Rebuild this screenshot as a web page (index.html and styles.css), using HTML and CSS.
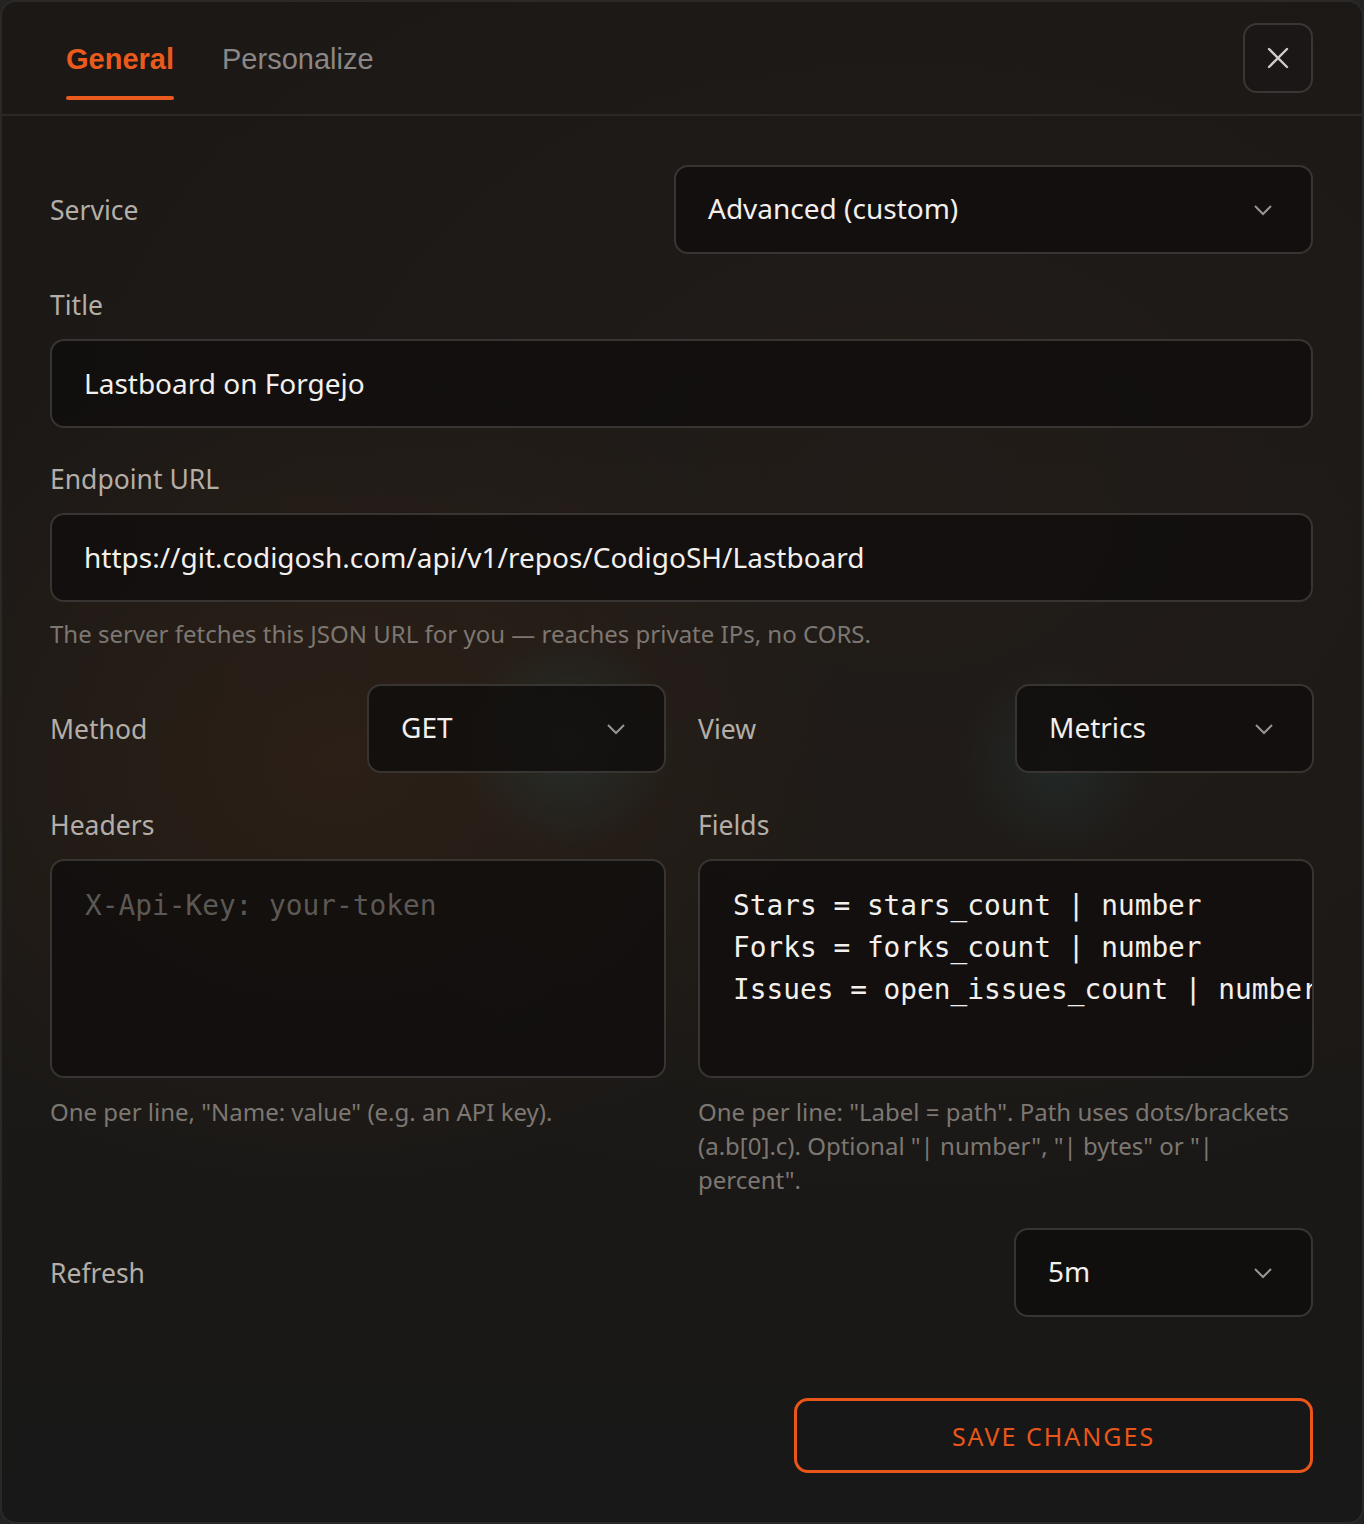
FILE: index.html
```html
<!DOCTYPE html>
<html>
<head>
<meta charset="utf-8">
<link rel="stylesheet" href="styles.css">
</head>
<body>
<div class="dialog">
  <header class="head">
    <nav class="tabs">
      <span class="tab active">General</span>
      <span class="tab">Personalize</span>
    </nav>
    <button class="close" aria-label="Close">
      <svg width="22" height="22" viewBox="0 0 22 22"><path d="M2 2L20 20M20 2L2 20" stroke="#cfcbc7" stroke-width="2.4" stroke-linecap="round"/></svg>
    </button>
  </header>
  <main class="body">
    <div class="row service">
      <label class="lbl">Service</label>
      <div class="select wide"><span>Advanced (custom)</span><svg class="chev" viewBox="0 0 20 12"><path d="M2 2L10 10L18 2" fill="none" stroke="#9a9590" stroke-width="2"/></svg></div>
    </div>
    <div class="field">
      <label class="lbl">Title</label>
      <div class="input">Lastboard on Forgejo</div>
    </div>
    <div class="field">
      <label class="lbl">Endpoint URL</label>
      <div class="input">https://git.codigosh.com/api/v1/repos/CodigoSH/Lastboard</div>
      <p class="help">The server fetches this JSON URL for you — reaches private IPs, no CORS.</p>
    </div>
    <div class="grid">
      <div class="row">
        <label class="lbl">Method</label>
        <div class="select"><span>GET</span><svg class="chev" viewBox="0 0 20 12"><path d="M2 2L10 10L18 2" fill="none" stroke="#9a9590" stroke-width="2"/></svg></div>
      </div>
      <div class="row">
        <label class="lbl">View</label>
        <div class="select"><span>Metrics</span><svg class="chev" viewBox="0 0 20 12"><path d="M2 2L10 10L18 2" fill="none" stroke="#9a9590" stroke-width="2"/></svg></div>
      </div>
      <div class="col">
        <label class="lbl">Headers</label>
        <div class="area placeholder">X-Api-Key: your-token</div>
        <p class="help">One per line, "Name: value" (e.g. an API key).</p>
      </div>
      <div class="col">
        <label class="lbl">Fields</label>
        <div class="area"><div class="ln">Stars = stars_count | number</div><div class="ln">Forks = forks_count | number</div><div class="ln">Issues = open_issues_count | number</div></div>
        <p class="help">One per line: "Label = path". Path uses dots/brackets (a.b[0].c). Optional "| number", "| bytes" or "| percent".</p>
      </div>
    </div>
    <div class="row refresh">
      <label class="lbl">Refresh</label>
      <div class="select"><span>5m</span><svg class="chev" viewBox="0 0 20 12"><path d="M2 2L10 10L18 2" fill="none" stroke="#9a9590" stroke-width="2"/></svg></div>
    </div>
  </main>
  <footer class="foot">
    <button class="save">SAVE CHANGES</button>
  </footer>
</div>
</body>
</html>
```
FILE: styles.css
```css
* { box-sizing: border-box; }
html, body { margin: 0; padding: 0; }
body {
  background: #242322;
  width: 1364px;
  height: 1524px;
  font-family: "Noto Sans", sans-serif;
}
.dialog {
  width: 1364px;
  height: 1524px;
  border: 2px solid #2b2927;
  border-radius: 16px;
  overflow: hidden;
  display: flex;
  flex-direction: column;
  background:
    radial-gradient(circle at 565px 740px, rgba(40,70,72,0.40) 0, rgba(40,70,72,0) 110px),
    radial-gradient(circle at 1055px 760px, rgba(40,70,72,0.32) 0, rgba(40,70,72,0) 100px),
    radial-gradient(ellipse 520px 420px at 330px 760px, rgba(60,38,22,0.45) 0, rgba(60,38,22,0) 100%),
    radial-gradient(ellipse 900px 700px at 900px 500px, rgba(45,35,28,0.35) 0, rgba(45,35,28,0) 100%),
    linear-gradient(180deg, #1b1816 0%, #1c1916 60%, #191817 88%, #181818 100%);
}
.head {
  height: 114px;
  flex: none;
  border-bottom: 2px solid #2b2826;
  display: flex;
  align-items: flex-start;
  justify-content: space-between;
  padding: 0 49px 0 64px;
}
.tabs { display: flex; gap: 48px; height: 100%; }
.tab {
  font-family: "Liberation Sans", Arial, sans-serif;
  font-size: 29px;
  color: #8b8784;
  padding-top: 41px;
  height: 98px;
  position: relative;
}
.tab.active { color: #ea5a1c; font-weight: bold; }
.tab.active::after {
  content: "";
  position: absolute;
  left: 0; right: 0; bottom: 0;
  height: 4px;
  border-radius: 2px;
  background: #ea5a1c;
}
.close {
  margin-top: 21px;
  width: 70px; height: 70px;
  border: 2px solid #393634;
  border-radius: 14px;
  background: #1a1716;
  display: flex; align-items: center; justify-content: center;
  padding: 0;
}
.body {
  flex: none;
  padding: 49px 49px 0 48px;
  display: flex;
  flex-direction: column;
}
.lbl {
  font-size: 26.5px;
  color: #b3aea8;
  display: block;
}
.row {
  display: flex;
  align-items: center;
  justify-content: space-between;
  height: 89px;
}
.select, .input, .area {
  background: rgba(16,13,12,0.82);
  border: 2px solid #383432;
  border-radius: 14px;
  color: #f2efec;
  font-size: 28px;
}
.select {
  width: 299px;
  height: 89px;
  display: flex;
  align-items: center;
  justify-content: space-between;
  padding: 0 38px 0 32px;
}
.select span { margin-top: -4px; }
.select.wide { width: 639px; }
.chev { width: 20px; height: 12px; }
.field { margin-top: 33px; }
.field .lbl { margin-bottom: 16px; }
.input {
  height: 89px;
  display: flex;
  align-items: center;
  padding: 0 32px;
  padding-bottom: 2px;
}
.help {
  margin: 15px 0 0;
  font-size: 24px;
  line-height: 34px;
  color: #7d7772;
}
.grid {
  margin-top: 33px;
  display: grid;
  grid-template-columns: 616px 616px;
  column-gap: 32px;
}
.col { padding-top: 34px; }
.col .lbl { margin-bottom: 16px; }
.area {
  height: 219px;
  padding: 24px 0 0 33px;
  font-family: "DejaVu Sans Mono", monospace;
  font-size: 27.8px;
  line-height: 42px;
  overflow: hidden;
}
.ln { white-space: pre; height: 42px; }
.area.placeholder { color: #5c5855; }
.col .help { margin-top: 17px; }
.refresh { margin-top: 31px; }
.foot {
  flex: 1;
  display: flex;
  justify-content: flex-end;
  align-items: flex-start;
  padding: 81px 49px 0 0;
}
.save {
  width: 519px;
  height: 75px;
  border: 3px solid #e8561a;
  border-radius: 14px;
  background: #171717;
  color: #e8561a;
  font-family: "Noto Sans", sans-serif;
  font-size: 25px;
  letter-spacing: 2px;
  padding: 0;
}
```
